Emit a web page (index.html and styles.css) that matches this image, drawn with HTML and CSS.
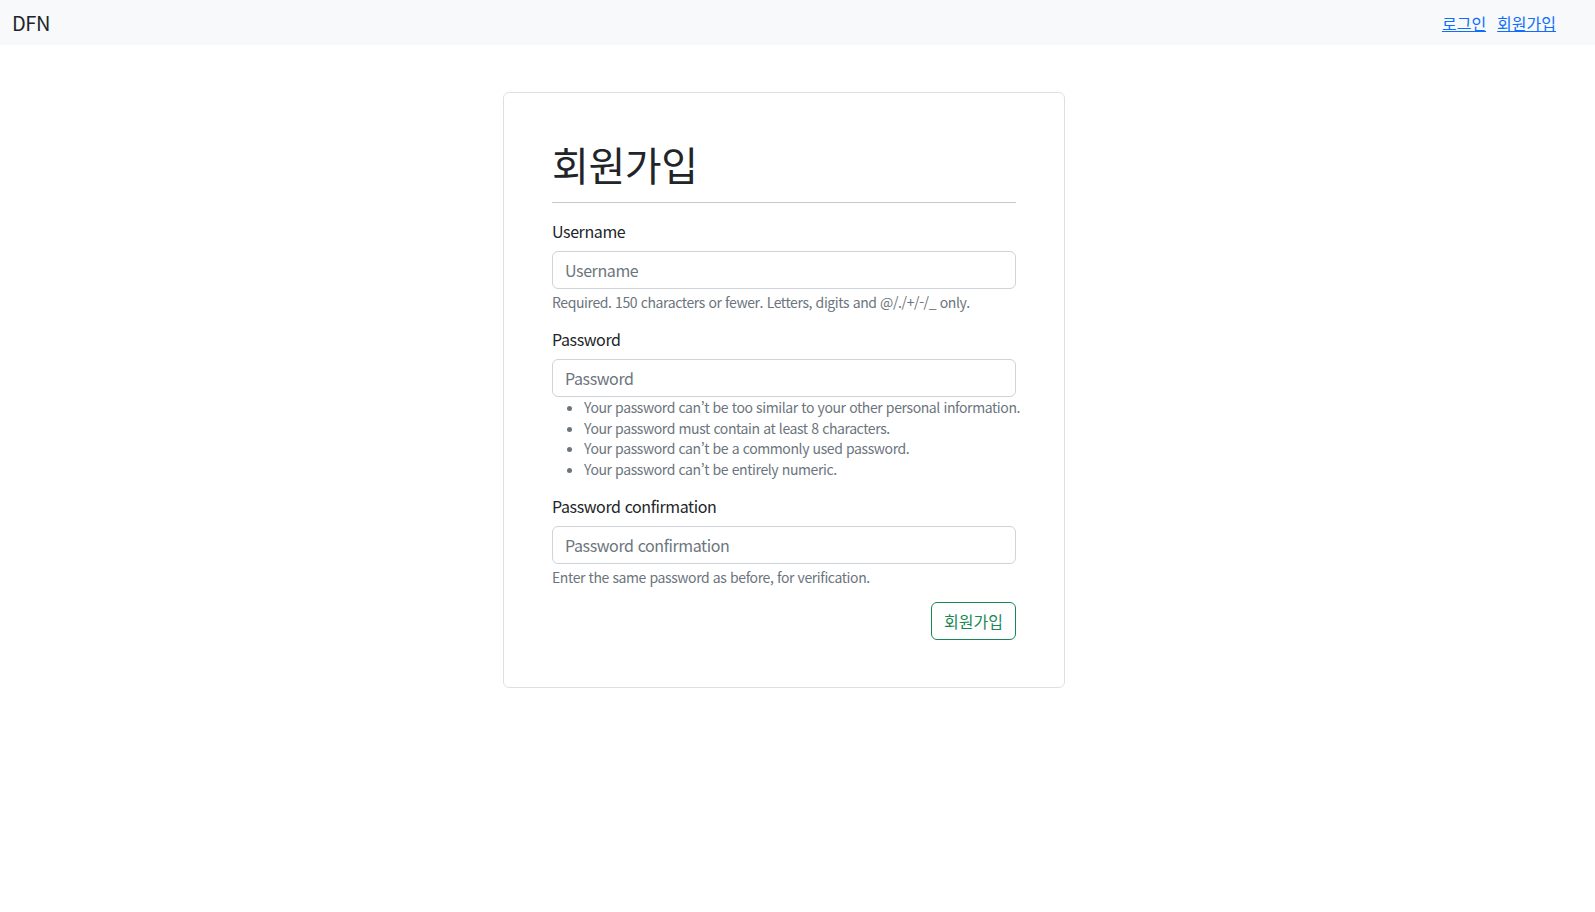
FILE: index.html
```html
<!DOCTYPE html>
<html lang="ko">
<head>
<meta charset="utf-8">
<title>회원가입</title>
<link rel="stylesheet" href="styles.css">
</head>
<body>
<nav class="navbar">
  <a class="brand" href="#">DFN</a>
  <div class="nav-links">
    <a href="#">로그인</a>
    <a href="#">회원가입</a>
  </div>
</nav>
<main class="page">
  <div class="card">
    <h1 class="title">회원가입</h1>
    <hr class="divider">
    <form class="form">
      <div class="group">
        <label class="label" for="u">Username</label>
        <input class="control" id="u" type="text" placeholder="Username">
        <div class="help">Required. 150 characters or fewer. Letters, digits and @/./+/-/_ only.</div>
      </div>
      <div class="group">
        <label class="label" for="p">Password</label>
        <input class="control" id="p" type="password" placeholder="Password">
        <ul class="help-list">
          <li>Your password can’t be too similar to your other personal information.</li>
          <li>Your password must contain at least 8 characters.</li>
          <li>Your password can’t be a commonly used password.</li>
          <li>Your password can’t be entirely numeric.</li>
        </ul>
      </div>
      <div class="group">
        <label class="label" for="p2">Password confirmation</label>
        <input class="control" id="p2" type="password" placeholder="Password confirmation">
        <div class="help">Enter the same password as before, for verification.</div>
      </div>
      <div class="actions">
        <button class="btn" type="button">회원가입</button>
      </div>
    </form>
  </div>
</main>
</body>
</html>
```
FILE: styles.css
```css
* { box-sizing: border-box; }
html, body { margin: 0; padding: 0; }
body {
  font-family: "Noto Sans CJK KR", "Noto Sans", sans-serif;
  font-size: 16px;
  line-height: 1.5;
  color: #212529;
  background: #fff;
  letter-spacing: -0.4px;
}
.navbar {
  height: 45px;
  background: #f8f9fa;
  display: flex;
  align-items: center;
  justify-content: space-between;
  padding: 0 39px 0 12px;
}
.brand {
  font-size: 20px;
  color: #212529;
  text-decoration: none;
  line-height: 1;
}
.nav-links { display: flex; gap: 11px; }
.nav-links a {
  color: #0d6efd;
  text-decoration: underline;
  font-size: 16px;
  letter-spacing: 0;
}
.page {
  display: flex;
  justify-content: center;
  padding: 47px 27px 0 0;
}
.card {
  width: 562px;
  border: 1px solid rgba(0,0,0,0.125);
  border-radius: 6px;
  padding: 47px 48px 47px;
}
.title {
  margin: 0;
  font-size: 40px;
  font-weight: 400;
  line-height: 1.2;
}
.divider {
  margin: 14px 0 16px;
  border: 0;
  border-top: 1px solid #212529;
  opacity: 0.25;
}
.group { margin-bottom: 14px; }
.label {
  display: block;
  margin-bottom: 8px;
}
.control {
  display: block;
  width: 100%;
  height: 38px;
  padding: 6px 12px;
  font: inherit;
  font-size: 16px;
  letter-spacing: -0.4px;
  color: #212529;
  border: 1px solid #ced4da;
  border-radius: 6px;
  background: #fff;
}
.control::placeholder { color: #6c757d; opacity: 1; }
.help {
  margin-top: 3px;
  font-size: 14px;
  color: #6c757d;
}
.help-list {
  margin: 0 0 15px;
  padding-left: 32px;
  font-size: 14px;
  line-height: 1.47;
  color: #6c757d;
}
.help-list li { white-space: nowrap; }
.actions {
  display: flex;
  justify-content: flex-end;
}
.btn {
  font: inherit;
  font-size: 16px;
  letter-spacing: 0;
  line-height: 1.5;
  color: #198754;
  background: #fff;
  border: 1px solid #198754;
  border-radius: 6px;
  padding: 6px 12px;
  cursor: pointer;
}
```
